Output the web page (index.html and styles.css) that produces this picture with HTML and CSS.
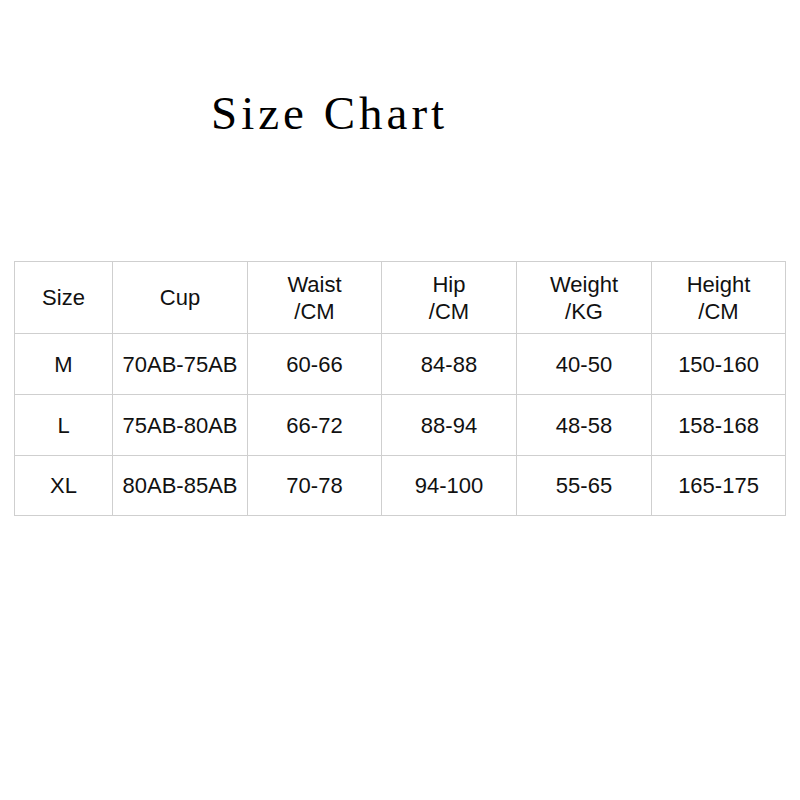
FILE: index.html
```html
<!DOCTYPE html>
<html>
<head>
<meta charset="utf-8">
<link rel="stylesheet" href="styles.css">
</head>
<body>
<div class="page">
  <h1 class="title">Size Chart</h1>
  <table class="chart">
    <colgroup>
      <col class="c1"><col class="c2"><col class="c3"><col class="c4"><col class="c5"><col class="c6">
    </colgroup>
    <tr class="head">
      <td>Size</td><td>Cup</td><td>Waist<br>/CM</td><td>Hip<br>/CM</td><td>Weight<br>/KG</td><td>Height<br>/CM</td>
    </tr>
    <tr class="r1">
      <td>M</td><td>70AB-75AB</td><td>60-66</td><td>84-88</td><td>40-50</td><td>150-160</td>
    </tr>
    <tr class="r2">
      <td>L</td><td>75AB-80AB</td><td>66-72</td><td>88-94</td><td>48-58</td><td>158-168</td>
    </tr>
    <tr class="r3">
      <td>XL</td><td>80AB-85AB</td><td>70-78</td><td>94-100</td><td>55-65</td><td>165-175</td>
    </tr>
  </table>
</div>
</body>
</html>
```
FILE: styles.css
```css
html, body {
  margin: 0;
  padding: 0;
  background: #ffffff;
}
.page {
  width: 800px;
  height: 800px;
  padding-top: 86px;
  box-sizing: border-box;
}
.title {
  margin: 0 0 0 211px;
  font-family: "Liberation Serif", serif;
  font-weight: normal;
  font-size: 47px;
  letter-spacing: 4px;
  line-height: 54px;
  color: #000;
  height: 54px;
}
.chart {
  margin: 121px 0 0 14px;
  border-collapse: collapse;
  table-layout: fixed;
  width: 772px;
  font-family: "Liberation Sans", Arial, sans-serif;
  font-size: 22px;
  color: #111;
}
.chart td {
  border: 1.5px solid #cfcfcf;
  text-align: center;
  vertical-align: middle;
  padding: 0;
  line-height: 27px;
}
.c1 { width: 98px; }
.c2 { width: 135px; }
.c3 { width: 134px; }
.c4 { width: 135px; }
.c5 { width: 135px; }
.c6 { width: 134px; }
.head td { height: 71px; }
.r1 td, .r2 td { height: 60px; }
.r3 td { height: 59px; }
```
